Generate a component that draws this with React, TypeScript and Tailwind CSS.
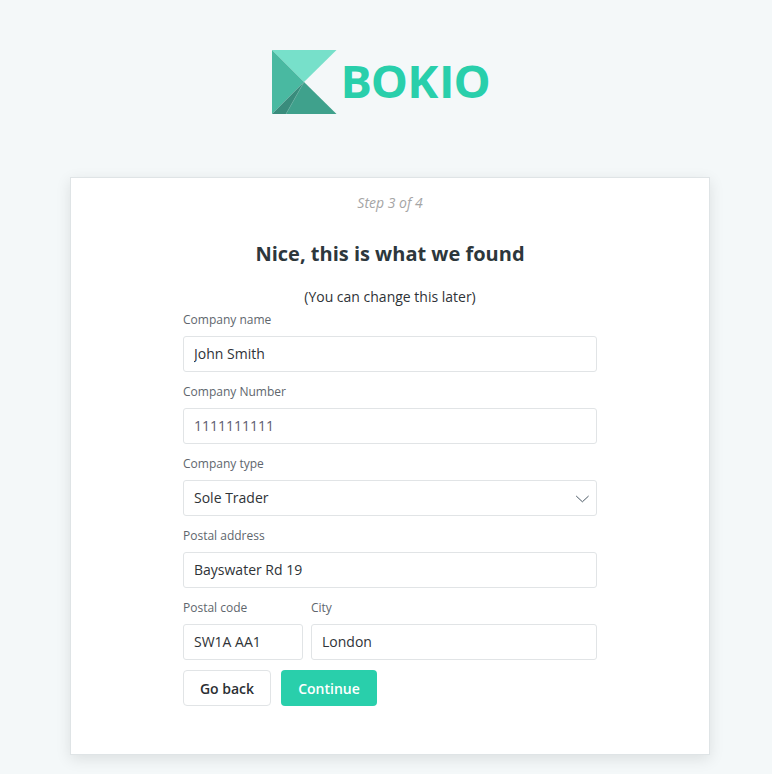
import { useState } from "react";

const Logo = () => {
  return (
    <svg
      width="220"
      height="64"
      viewBox="0 0 220 64"
      className="block overflow-visible"
    >
      <polygon points="0,0 64.5,0 32,32" fill="#77e0ca" />
      <polygon points="0,0 32,32 0,64" fill="#49b9a1" />
      <polygon points="32,32 14,64 0,64" fill="#398c7c" />
      <polygon points="32,32 64.5,64 14,64" fill="#3fa18c" />
      <path d="M32 32 14 64" stroke="#62ab9c" strokeWidth="0.6" />
      <text
        x="65.9 95 130 160.6 174.4"
        y="48.3"
        transform="scale(1.04 1)"
        fill="#29cfab"
        className="font-['Open_Sans',sans-serif] text-[45px] font-bold"
      >
        BOKIO
      </text>
    </svg>
  );
};

type FieldProps = {
  label: string;
  name: string;
  value: string;
  onChange: (e: React.ChangeEvent<HTMLInputElement>) => void;
  className?: string;
  inputClass?: string;
};

const Field = ({
  label,
  name,
  value,
  onChange,
  className = "w-full",
  inputClass = "text-[#2f3337]",
}: FieldProps) => {
  return (
    <label className={`flex flex-col ${className}`}>
      <span className="mb-[7px] text-xs leading-[18px] text-[#60666d]">
        {label}
      </span>
      <input
        type="text"
        name={name}
        value={value}
        onChange={onChange}
        className={`h-9 w-full rounded-[3px] border border-[#e1e4e6] bg-white px-2.5 pb-0.5 text-sm focus:outline-none focus:border-[#29cfab] ${inputClass}`}
      />
    </label>
  );
};

const App = () => {
  const [company, setCompany] = useState({
    name: "John Smith",
    number: "1111111111",
    type: "Sole Trader",
    address: "Bayswater Rd 19",
    postalCode: "SW1A AA1",
    city: "London",
  });

  const handleChange = (
    e: React.ChangeEvent<HTMLInputElement | HTMLSelectElement>
  ) => {
    setCompany({ ...company, [e.target.name]: e.target.value });
  };

  return (
    <div className="h-screen overflow-hidden bg-[#f4f8f9] font-['Open_Sans','Noto_Sans',sans-serif]">
      <div className="flex w-[780px] flex-col items-center pt-[50px]">
        <div className="mb-[63px] mr-[16px] w-[220px]">
          <Logo />
        </div>

        <div className="flex h-[578px] w-[640px] flex-col items-center border border-[#dfe4e6] bg-white pt-[15px] shadow-[0_4px_14px_rgba(0,0,0,0.1)]">
          <p className="text-sm leading-5 italic text-[#a5a5a5]">Step 3 of 4</p>
          <h1 className="mt-[27px] text-xl leading-7 font-bold text-[#2d373c]">
            Nice, this is what we found
          </h1>
          <p className="mt-[19px] text-sm leading-5 text-[#2f3337]">
            (You can change this later)
          </p>

          <form className="mt-1 flex w-[414px] flex-col gap-[11px]">
            <Field
              label="Company name"
              name="name"
              value={company.name}
              onChange={handleChange}
            />
            <Field
              label="Company Number"
              name="number"
              value={company.number}
              onChange={handleChange}
              inputClass="text-[#5c5c70]"
            />
            <label className="flex flex-col">
              <span className="mb-[7px] text-xs leading-[18px] text-[#60666d]">
                Company type
              </span>
              <div className="relative">
                <select
                  name="type"
                  value={company.type}
                  onChange={handleChange}
                  className="h-9 w-full appearance-none rounded-[3px] border border-[#e1e4e6] bg-white px-2.5 text-sm text-[#2f3337] focus:outline-none"
                >
                  <option>Sole Trader</option>
                  <option>Limited Company</option>
                </select>
                <svg
                  width="14"
                  height="8"
                  viewBox="0 0 14 8"
                  fill="none"
                  stroke="#4a5864"
                  className="pointer-events-none absolute top-[15px] right-2"
                >
                  <path d="M1.2 1 7.4 6.8 13.6 1" />
                </svg>
              </div>
            </label>
            <Field
              label="Postal address"
              name="address"
              value={company.address}
              onChange={handleChange}
            />
            <div className="flex gap-2">
              <Field
                label="Postal code"
                name="postalCode"
                value={company.postalCode}
                onChange={handleChange}
                className="w-[120px]"
              />
              <Field
                label="City"
                name="city"
                value={company.city}
                onChange={handleChange}
                className="flex-1"
              />
            </div>

            <div className="-mt-px flex gap-2.5">
              <button
                type="button"
                className="h-9 w-[88px] rounded border border-[#e1e4e6] bg-white pt-0.5 text-sm font-semibold text-[#2b2f33]"
              >
                Go back
              </button>
              <button
                type="button"
                className="h-9 w-24 rounded bg-[#29cfab] pt-0.5 text-sm font-semibold text-white"
              >
                Continue
              </button>
            </div>
          </form>
        </div>
      </div>
    </div>
  );
};

export default App;
